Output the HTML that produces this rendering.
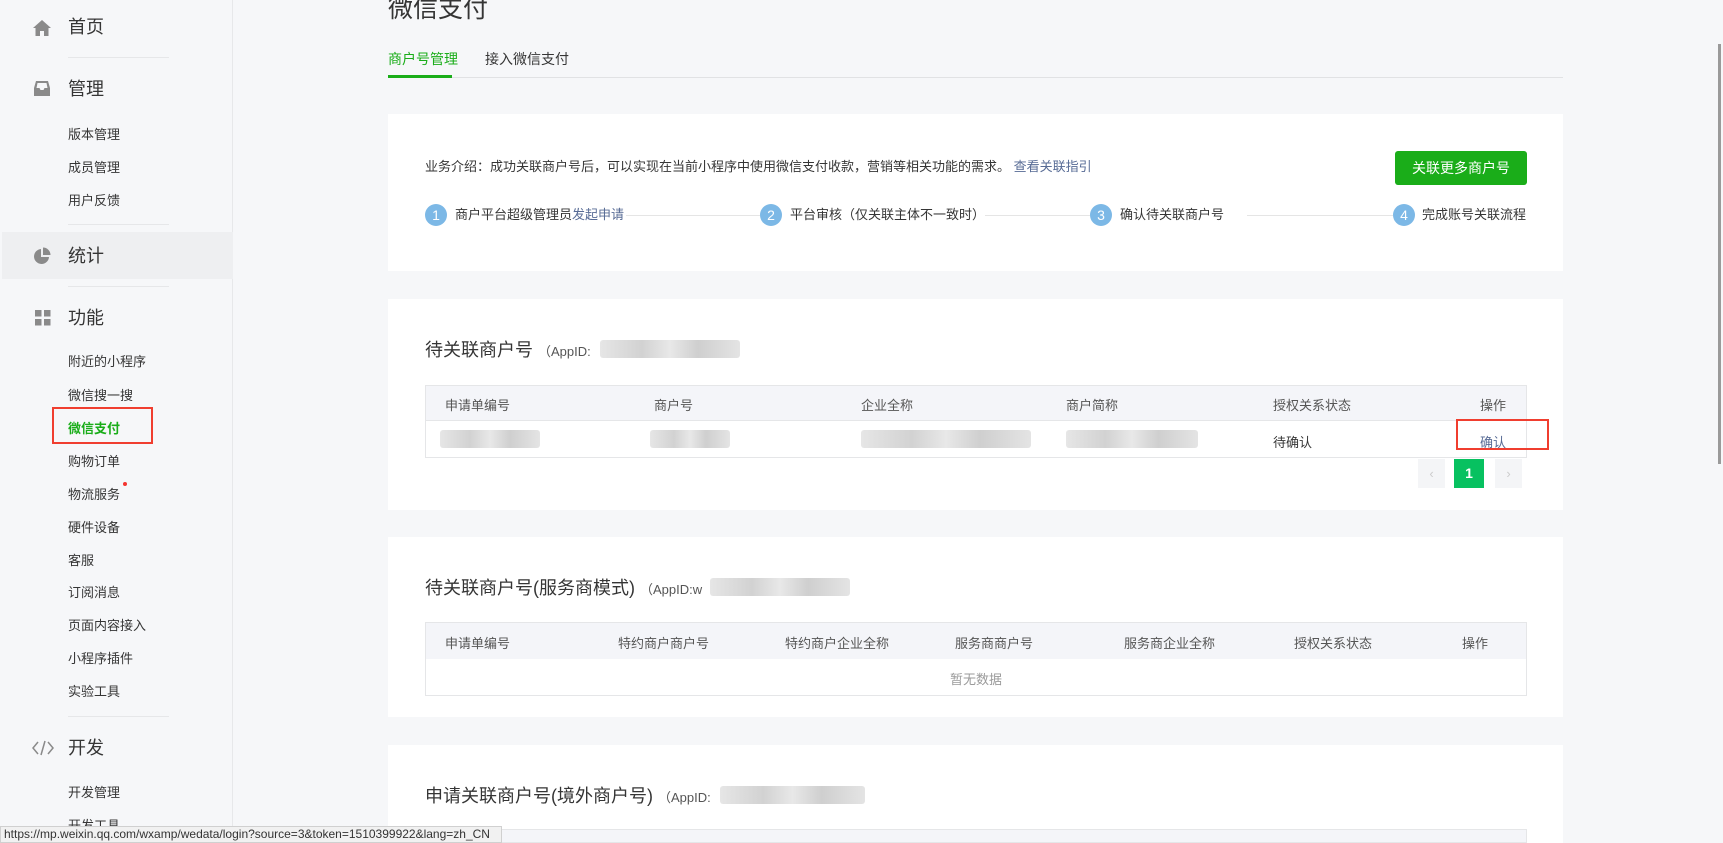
<!DOCTYPE html>
<html><head><meta charset="utf-8"><style>
*{margin:0;padding:0;box-sizing:border-box}
body{width:1723px;height:843px;overflow:hidden;background:#f6f7f9;font-family:"Liberation Sans","Noto Sans CJK SC",sans-serif;color:#353535;position:relative}
.a{position:absolute;white-space:nowrap}
.side{position:absolute;left:0;top:0;width:233px;height:843px;background:#f6f7f9;border-right:1px solid #e7e8ea}
.main{font-size:18px;color:#353535;line-height:20px}
.sub{font-size:13px;color:#353535;line-height:16px}
.div{position:absolute;left:68px;width:101px;height:1px;background:#e6e7e9}
.card{position:absolute;left:388px;width:1175px;background:#fff}
.t{font-size:13px;color:#555;line-height:16px}
.blur{position:absolute;height:18px;background:linear-gradient(90deg,#e6e6e6,#d2d2d2 30%,#e8e8e8 50%,#cfcfcf 70%,#e4e4e4);border-radius:3px}
.step{position:absolute;width:22px;height:22px;border-radius:11px;background:#7cb8e6;color:#fff;font-size:14px;text-align:center;line-height:22px}
.line{position:absolute;height:1px;background:#e5e5e5;top:215px}
.th{position:absolute;font-size:13px;color:#555}
</style></head><body>
<div class="side">
<svg class="a" style="left:32px;top:19px" width="20" height="18" viewBox="0 0 20 18"><path d="M10 1 L1 9 H3.5 V17 H8 V12 H12 V17 H16.5 V9 H19 Z" fill="#8a8a8a"/></svg>
<div class="a main" style="left:68px;top:17px">首页</div>
<div class="div" style="top:57px"></div>
<svg class="a" style="left:33px;top:80px" width="18" height="17" viewBox="0 0 18 17"><path d="M3 1 H15 L17 8 V16 H1 V8 Z M3.5 8 H6.5 L7.5 10 H10.5 L11.5 8 H14.5 L13.5 3 H4.5 Z" fill="#8a8a8a" fill-rule="evenodd"/></svg>
<div class="a main" style="left:68px;top:79px">管理</div>
<div class="a sub" style="left:68px;top:127px">版本管理</div>
<div class="a sub" style="left:68px;top:160px">成员管理</div>
<div class="a sub" style="left:68px;top:193px">用户反馈</div>
<div class="div" style="top:224px"></div>
<div class="a" style="left:2px;top:232px;width:231px;height:47px;background:#eeeff1"></div>
<svg class="a" style="left:33px;top:247px" width="18" height="18" viewBox="0 0 18 18"><path d="M8 2 A7.5 7.5 0 1 0 16 10 H8 Z" fill="#8a8a8a"/><path d="M10 0.5 A7.5 7.5 0 0 1 17.5 8 H10 Z" fill="#8a8a8a"/></svg>
<div class="a main" style="left:68px;top:246px">统计</div>
<div class="div" style="top:286px"></div>
<svg class="a" style="left:35px;top:310px" width="16" height="16" viewBox="0 0 16 16" fill="#8a8a8a"><rect x="0" y="0" width="6.5" height="6.5"/><rect x="9" y="0" width="6.5" height="6.5"/><rect x="0" y="9" width="6.5" height="6.5"/><rect x="9" y="9" width="6.5" height="6.5"/></svg>
<div class="a main" style="left:68px;top:308px">功能</div>
<div class="a sub" style="left:68px;top:354px">附近的小程序</div>
<div class="a sub" style="left:68px;top:388px">微信搜一搜</div>
<div class="a sub" style="left:68px;top:421px;color:#1aad19;font-weight:bold">微信支付</div>
<div class="a" style="left:52px;top:407px;width:101px;height:37px;border:2px solid #f03e2f"></div>
<div class="a sub" style="left:68px;top:454px">购物订单</div>
<div class="a sub" style="left:68px;top:487px">物流服务</div>
<div class="a" style="left:123px;top:482px;width:4px;height:4px;border-radius:2px;background:#f43530"></div>
<div class="a sub" style="left:68px;top:520px">硬件设备</div>
<div class="a sub" style="left:68px;top:553px">客服</div>
<div class="a sub" style="left:68px;top:585px">订阅消息</div>
<div class="a sub" style="left:68px;top:618px">页面内容接入</div>
<div class="a sub" style="left:68px;top:651px">小程序插件</div>
<div class="a sub" style="left:68px;top:684px">实验工具</div>
<div class="div" style="top:716px"></div>
<svg class="a" style="left:32px;top:740px" width="22" height="16" viewBox="0 0 22 16" fill="none" stroke="#8a8a8a" stroke-width="1.5"><path d="M6 2 L1 8 L6 14 M16 2 L21 8 L16 14 M13 1 L9 15"/></svg>
<div class="a main" style="left:68px;top:738px">开发</div>
<div class="a sub" style="left:68px;top:785px">开发管理</div>
<div class="a sub" style="left:68px;top:818px">开发工具</div>
</div>

<div class="a" style="left:388px;top:-6px;font-size:25px;color:#353535;line-height:30px">微信支付</div>
<div class="a" style="left:388px;top:49px;font-size:14px;color:#1aad19">商户号管理</div>
<div class="a" style="left:485px;top:49px;font-size:14px;color:#353535">接入微信支付</div>
<div class="a" style="left:388px;top:77px;width:1175px;height:1px;background:#e1e2e4"></div>
<div class="a" style="left:388px;top:75px;width:64px;height:3px;background:#1aad19"></div>

<div class="card" style="top:114px;height:157px"></div>
<div class="a t" style="left:425px;top:159px;color:#353535">业务介绍：成功关联商户号后，可以实现在当前小程序中使用微信支付收款，营销等相关功能的需求。 <span style="color:#576b95">查看关联指引</span></div>
<div class="a" style="left:1395px;top:151px;width:132px;height:34px;background:#1aad19;border-radius:3px;color:#fff;font-size:14px;text-align:center;line-height:34px">关联更多商户号</div>
<div class="step" style="left:425px;top:204px">1</div>
<div class="a t" style="left:455px;top:207px;color:#353535">商户平台超级管理员<span style="color:#576b95">发起申请</span></div>
<div class="line" style="left:626px;width:134px"></div>
<div class="step" style="left:760px;top:204px">2</div>
<div class="a t" style="left:790px;top:207px;color:#353535">平台审核（仅关联主体不一致时）</div>
<div class="line" style="left:985px;width:105px"></div>
<div class="step" style="left:1090px;top:204px">3</div>
<div class="a t" style="left:1120px;top:207px;color:#353535">确认待关联商户号</div>
<div class="line" style="left:1247px;width:146px"></div>
<div class="step" style="left:1393px;top:204px">4</div>
<div class="a t" style="left:1422px;top:207px;color:#353535">完成账号关联流程</div>

<div class="card" style="top:299px;height:211px"></div>
<div class="a" style="left:425px;top:336px;font-size:18px;color:#353535">待关联商户号 <span style="font-size:13px;color:#555">（AppID:</span></div>
<div class="blur" style="left:600px;top:340px;width:140px"></div>
<div class="a" style="left:425px;top:385px;width:1102px;height:73px;border:1px solid #e5e6e8"></div>
<div class="a" style="left:426px;top:386px;width:1100px;height:35px;background:#f4f5f9;border-bottom:1px solid #e5e6e8"></div>
<div class="th" style="left:445px;top:395px">申请单编号</div>
<div class="th" style="left:654px;top:395px">商户号</div>
<div class="th" style="left:861px;top:395px">企业全称</div>
<div class="th" style="left:1066px;top:395px">商户简称</div>
<div class="th" style="left:1273px;top:395px">授权关系状态</div>
<div class="th" style="left:1480px;top:395px">操作</div>
<div class="blur" style="left:440px;top:430px;width:100px"></div>
<div class="blur" style="left:650px;top:430px;width:80px"></div>
<div class="blur" style="left:861px;top:430px;width:170px"></div>
<div class="blur" style="left:1066px;top:430px;width:132px"></div>
<div class="th" style="left:1273px;top:432px;color:#353535">待确认</div>
<div class="th" style="left:1480px;top:432px;color:#576b95">确认</div>
<div class="a" style="left:1456px;top:419px;width:93px;height:31px;border:2px solid #f03e2f"></div>
<div class="a" style="left:1418px;top:459px;width:27px;height:29px;background:#f4f5f7;color:#ccc;text-align:center;line-height:29px;font-size:13px">‹</div>
<div class="a" style="left:1454px;top:459px;width:30px;height:29px;background:#07c160;color:#fff;text-align:center;line-height:29px;font-size:14px;font-weight:bold">1</div>
<div class="a" style="left:1495px;top:459px;width:27px;height:29px;background:#f4f5f7;color:#ccc;text-align:center;line-height:29px;font-size:13px">›</div>

<div class="card" style="top:537px;height:180px"></div>
<div class="a" style="left:425px;top:574px;font-size:18px;color:#353535">待关联商户号(服务商模式) <span style="font-size:13px;color:#555">（AppID:w</span></div>
<div class="blur" style="left:710px;top:578px;width:140px"></div>
<div class="a" style="left:425px;top:622px;width:1102px;height:74px;border:1px solid #e5e6e8"></div>
<div class="a" style="left:426px;top:623px;width:1100px;height:36px;background:#f4f5f9"></div>
<div class="th" style="left:445px;top:633px">申请单编号</div>
<div class="th" style="left:618px;top:633px">特约商户商户号</div>
<div class="th" style="left:785px;top:633px">特约商户企业全称</div>
<div class="th" style="left:955px;top:633px">服务商商户号</div>
<div class="th" style="left:1124px;top:633px">服务商企业全称</div>
<div class="th" style="left:1294px;top:633px">授权关系状态</div>
<div class="th" style="left:1462px;top:633px">操作</div>
<div class="th" style="left:950px;top:669px;color:#9a9a9a">暂无数据</div>

<div class="card" style="top:745px;height:98px"></div>
<div class="a" style="left:425px;top:782px;font-size:18px;color:#353535">申请关联商户号(境外商户号) <span style="font-size:13px;color:#555">（AppID:</span></div>
<div class="blur" style="left:720px;top:786px;width:145px"></div>
<div class="a" style="left:425px;top:829px;width:1102px;height:14px;background:#f4f5f9;border:1px solid #e5e6e8"></div>

<div class="a" style="left:1718px;top:44px;width:3px;height:420px;background:#9a9a9a"></div>
<div class="a" style="left:0;top:826px;width:502px;height:17px;background:#f1f1f1;border:1px solid #d0d0d0;font-size:12px;color:#333;line-height:15px;padding-left:3px">https://mp.weixin.qq.com/wxamp/wedata/login?source=3&amp;token=1510399922&amp;lang=zh_CN</div>
</body></html>
